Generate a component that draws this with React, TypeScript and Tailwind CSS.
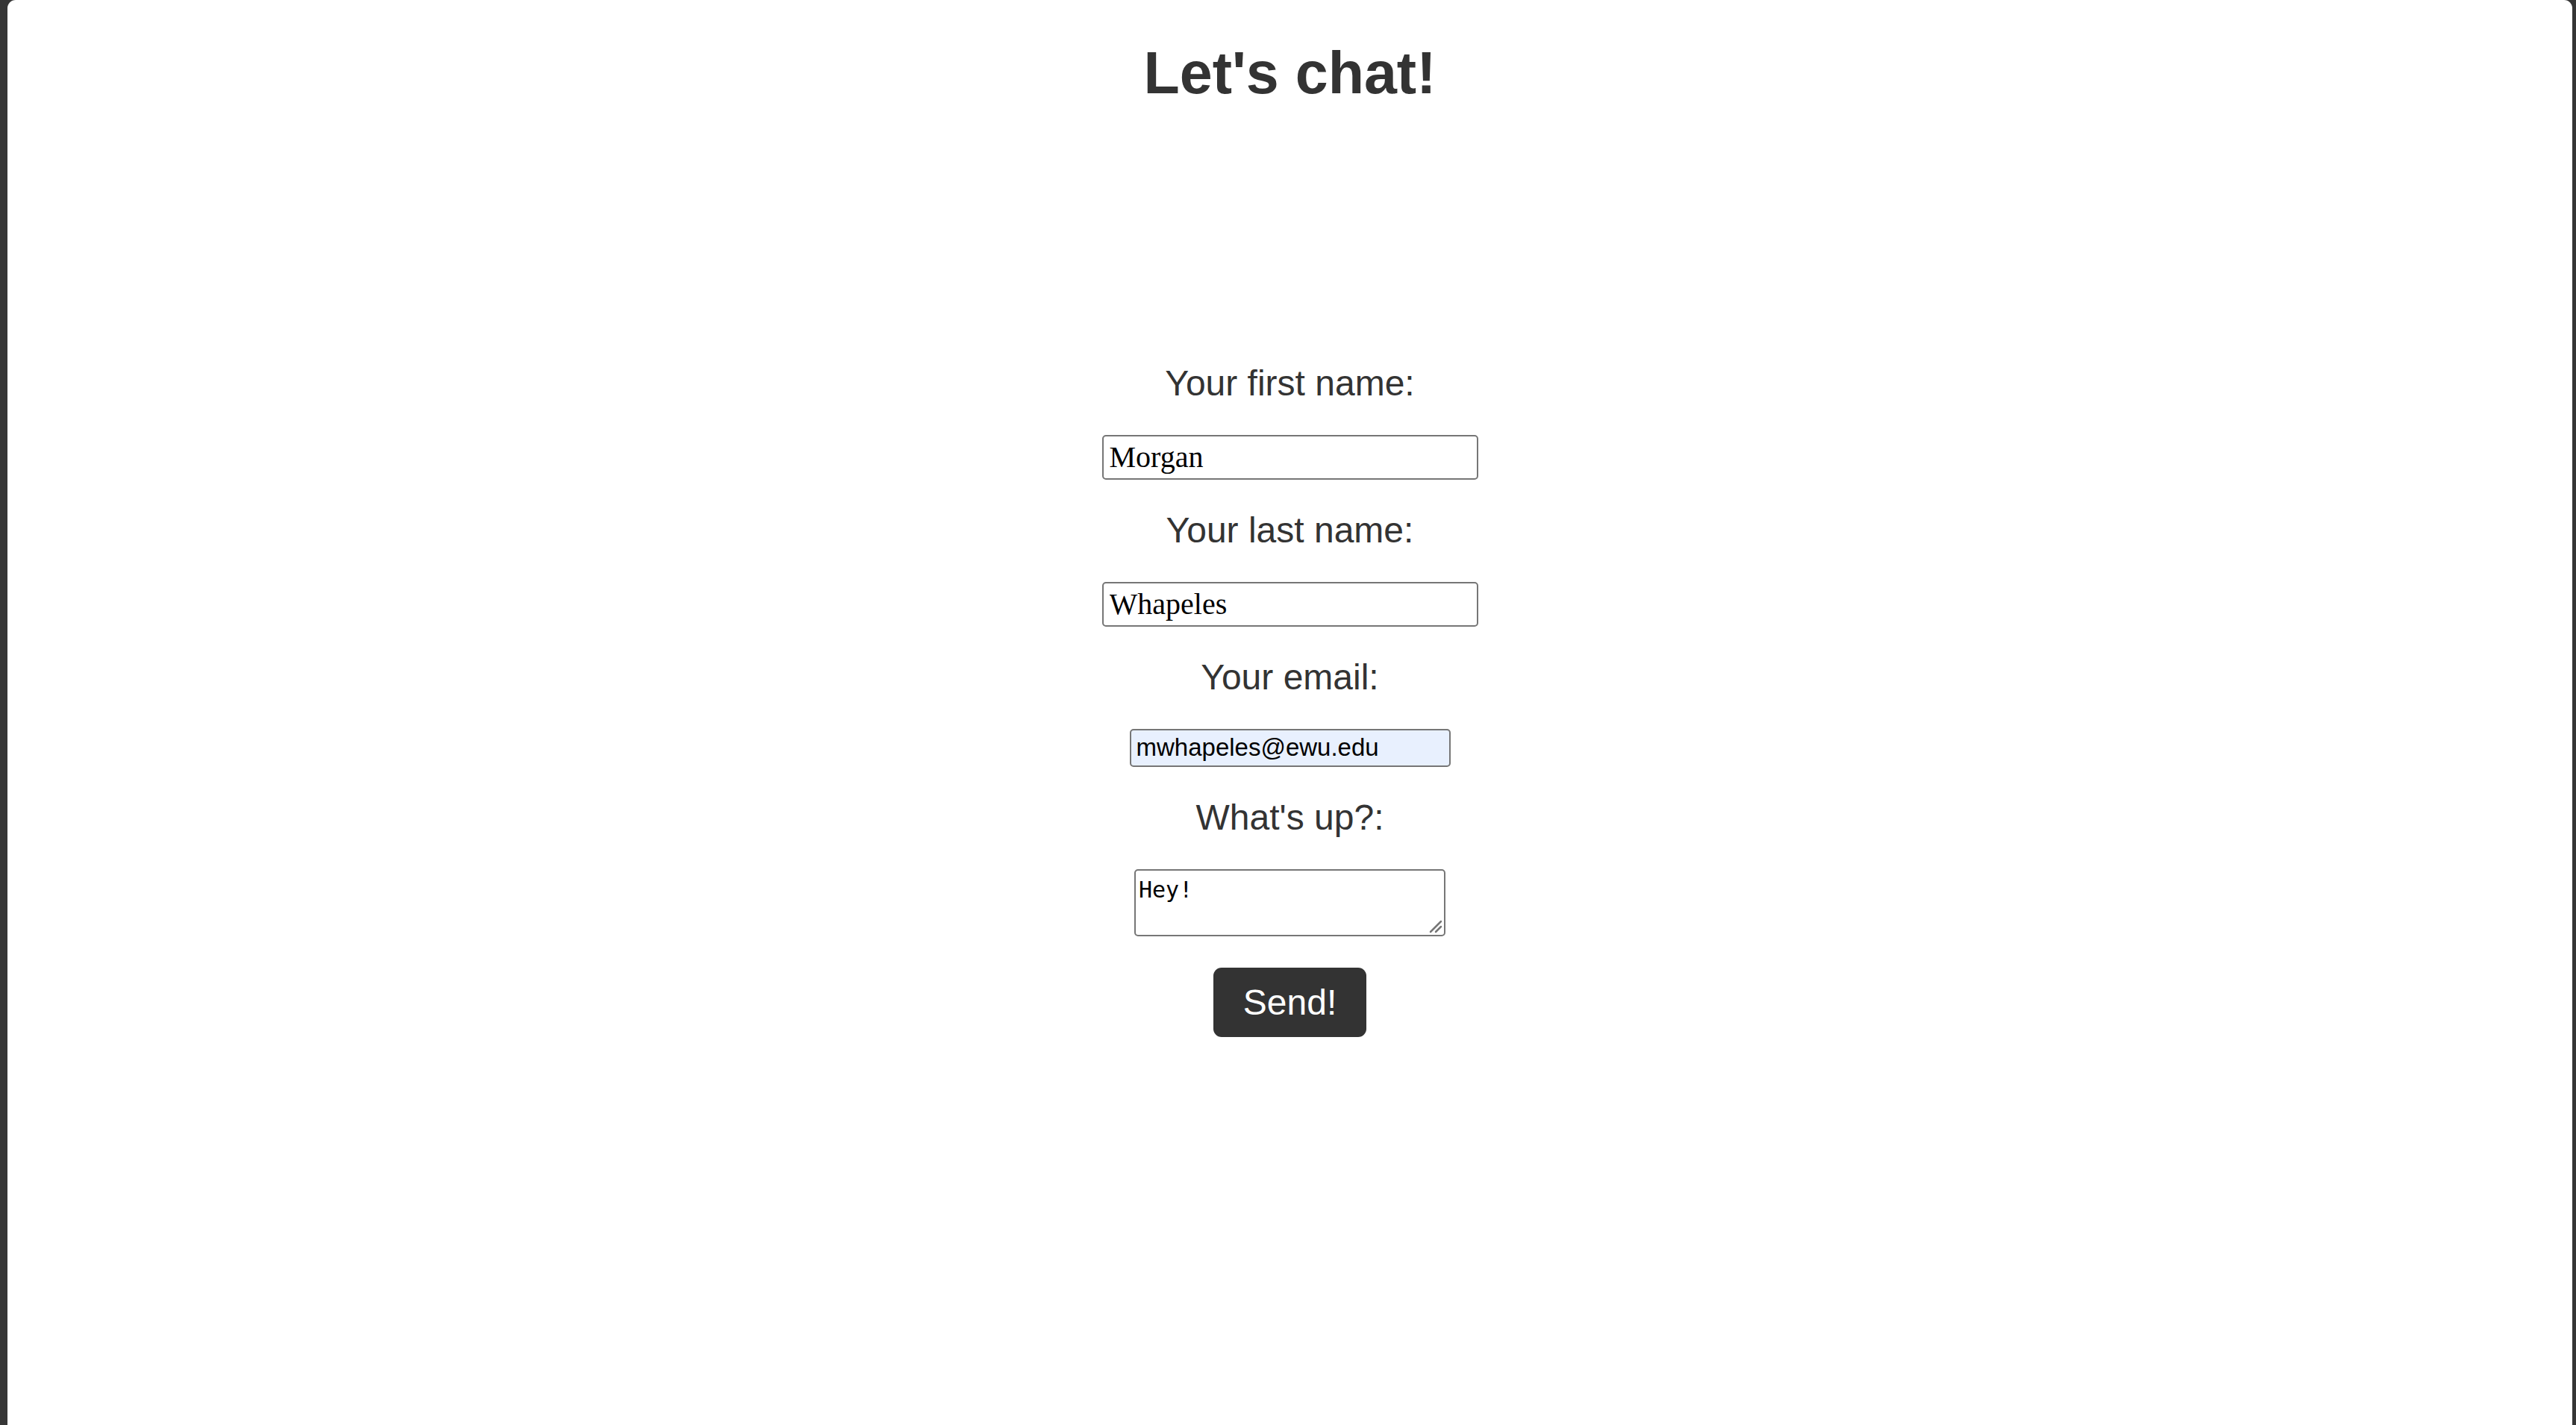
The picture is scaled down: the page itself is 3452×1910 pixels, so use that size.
import { FC } from "react";

const sans = "font-['Liberation_Sans',Arial,sans-serif]";

const Label: FC<{ text: string }> = ({ text }) => (
  <label className={`${sans} text-[48px] leading-none text-[#333]`}>{text}</label>
);

const App: FC = () => {
  return (
    <div className="min-h-screen bg-[#363636] pl-[10px] pr-[5px]">
      <div className="min-h-[1910px] bg-white rounded-t-[11px] flex flex-col items-center">
        {/* Title */}
        <h1 className={`${sans} mt-[58px] text-[79px] leading-none font-bold text-[#333]`}>
          Let's chat!
        </h1>

        {/* Contact form */}
        <form
          className="mt-[353px] flex flex-col items-center gap-[44.5px]"
          onSubmit={(e) => e.preventDefault()}
        >
          <Label text="Your first name:" />
          <input
            type="text"
            defaultValue="Morgan"
            className="w-[504px] h-[60px] border-2 border-[#767676] rounded-[5px] px-[8px] font-['Liberation_Serif','Times_New_Roman',serif] text-[40px] text-black bg-white"
          />

          <Label text="Your last name:" />
          <input
            type="text"
            defaultValue="Whapeles"
            className="w-[504px] h-[60px] border-2 border-[#767676] rounded-[5px] px-[8px] font-['Liberation_Serif','Times_New_Roman',serif] text-[40px] text-black bg-white"
          />

          <Label text="Your email:" />
          <input
            type="email"
            defaultValue="mwhapeles@ewu.edu"
            className={`${sans} w-[430px] h-[51px] border-2 border-[#767676] rounded-[5px] px-[7px] text-[33px] text-black bg-[#e8f0fe]`}
          />

          <Label text="What's up?:" />
          <div className="relative">
            <textarea
              defaultValue="Hey!"
              className="block w-[417px] h-[90px] border-2 border-[#767676] rounded-[5px] pt-[3px] pl-[4px] font-['DejaVu_Sans_Mono','Liberation_Mono',monospace] text-[30px] leading-normal text-black resize-none"
            />
            {/* resize grip */}
            <svg
              className="absolute right-[4px] bottom-[4px] w-[18px] h-[18px] pointer-events-none"
              viewBox="0 0 18 18"
              fill="none"
              stroke="#767676"
              strokeWidth="2.5"
              strokeLinecap="round"
            >
              <path d="M2 16 16 2" />
              <path d="M9 16 16 9" />
            </svg>
          </div>

          <button
            type="submit"
            className={`${sans} -mt-[2px] w-[205px] h-[93px] bg-[#333] rounded-[11px] text-white text-[48px] leading-none`}
          >
            Send!
          </button>
        </form>
      </div>
    </div>
  );
};

export default App;
